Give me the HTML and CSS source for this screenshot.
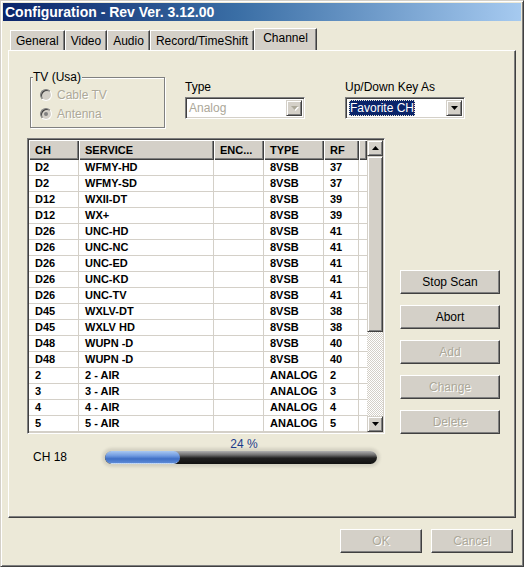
FILE: index.html
```html
<!DOCTYPE html>
<html lang="en">
<head>
  <meta charset="UTF-8">
  <title>Configuration - Rev Ver. 3.12.00</title>
  <link rel="stylesheet" href="styles.css">
</head>
<body>
  <div class="window">
    <div class="titlebar">Configuration - Rev Ver. 3.12.00</div>

    <div class="tabs">
      <div class="tab">General</div>
      <div class="tab">Video</div>
      <div class="tab">Audio</div>
      <div class="tab">Record/TimeShift</div>
      <div class="tab active">Channel</div>
    </div>

    <div class="panel">
      <div class="top-row">
        <div class="groupbox">
          <span class="group-title">TV (Usa)</span>
          <div class="radio-row disabled"><span class="radio"></span>Cable TV</div>
          <div class="radio-row disabled"><span class="radio checked"></span>Antenna</div>
        </div>

        <div class="field">
          <div class="field-label">Type</div>
          <div class="combo disabled">
            <span class="combo-text">Analog</span>
            <span class="combo-btn"><svg width="7" height="4" viewBox="0 0 7 4"><path d="M0 0h7L3.5 4z"/></svg></span>
          </div>
        </div>

        <div class="field field-wide">
          <div class="field-label">Up/Down Key As</div>
          <div class="combo">
            <span class="combo-text"><span class="selected">Favorite CH</span></span>
            <span class="combo-btn"><svg width="7" height="4" viewBox="0 0 7 4"><path d="M0 0h7L3.5 4z"/></svg></span>
          </div>
        </div>
      </div>

      <div class="middle">
        <div class="listview">
          <table class="grid">
            <colgroup>
              <col style="width: 50px">
              <col style="width: 135px">
              <col style="width: 50px">
              <col style="width: 60px">
              <col style="width: 35px">
              <col>
            </colgroup>
            <thead>
              <tr><th>CH</th><th>SERVICE</th><th>ENC...</th><th>TYPE</th><th>RF</th><th></th></tr>
            </thead>
            <tbody>
              <tr><td>D2</td><td>WFMY-HD</td><td></td><td>8VSB</td><td>37</td><td></td></tr>
              <tr><td>D2</td><td>WFMY-SD</td><td></td><td>8VSB</td><td>37</td><td></td></tr>
              <tr><td>D12</td><td>WXII-DT</td><td></td><td>8VSB</td><td>39</td><td></td></tr>
              <tr><td>D12</td><td>WX+</td><td></td><td>8VSB</td><td>39</td><td></td></tr>
              <tr><td>D26</td><td>UNC-HD</td><td></td><td>8VSB</td><td>41</td><td></td></tr>
              <tr><td>D26</td><td>UNC-NC</td><td></td><td>8VSB</td><td>41</td><td></td></tr>
              <tr><td>D26</td><td>UNC-ED</td><td></td><td>8VSB</td><td>41</td><td></td></tr>
              <tr><td>D26</td><td>UNC-KD</td><td></td><td>8VSB</td><td>41</td><td></td></tr>
              <tr><td>D26</td><td>UNC-TV</td><td></td><td>8VSB</td><td>41</td><td></td></tr>
              <tr><td>D45</td><td>WXLV-DT</td><td></td><td>8VSB</td><td>38</td><td></td></tr>
              <tr><td>D45</td><td>WXLV HD</td><td></td><td>8VSB</td><td>38</td><td></td></tr>
              <tr><td>D48</td><td>WUPN -D</td><td></td><td>8VSB</td><td>40</td><td></td></tr>
              <tr><td>D48</td><td>WUPN -D</td><td></td><td>8VSB</td><td>40</td><td></td></tr>
              <tr><td>2</td><td>2 - AIR</td><td></td><td>ANALOG</td><td>2</td><td></td></tr>
              <tr><td>3</td><td>3 - AIR</td><td></td><td>ANALOG</td><td>3</td><td></td></tr>
              <tr><td>4</td><td>4 - AIR</td><td></td><td>ANALOG</td><td>4</td><td></td></tr>
              <tr><td>5</td><td>5 - AIR</td><td></td><td>ANALOG</td><td>5</td><td></td></tr>
            </tbody>
          </table>
          <div class="scrollbar">
            <div class="sb-btn"><svg width="7" height="4" viewBox="0 0 7 4"><path d="M0 4h7L3.5 0z"/></svg></div>
            <div class="sb-thumb"></div>
            <div class="sb-track"></div>
            <div class="sb-btn"><svg width="7" height="4" viewBox="0 0 7 4"><path d="M0 0h7L3.5 4z"/></svg></div>
          </div>
        </div>

        <div class="side-buttons">
          <button class="btn">Stop Scan</button>
          <button class="btn">Abort</button>
          <button class="btn" disabled>Add</button>
          <button class="btn" disabled>Change</button>
          <button class="btn" disabled>Delete</button>
        </div>
      </div>

      <div class="progress-row">
        <div class="progress-label">CH 18</div>
        <div class="progress">
          <div class="progress-percent">24 %</div>
          <div class="progress-track">
            <div class="progress-fill" style="width: 27.5%"></div>
          </div>
        </div>
      </div>
    </div>

    <div class="footer">
      <button class="btn btn-small" disabled>OK</button>
      <button class="btn btn-small" disabled>Cancel</button>
    </div>
  </div>
</body>
</html>
```

FILE: styles.css
```css
body {
  margin: 0;
  font-family: 'Liberation Sans', Arial, sans-serif;
  font-size: 12px;
  color: #000;
  background: #ece9d8;
}

.window {
  width: 524px;
  height: 567px;
  box-sizing: border-box;
  padding: 2px;
  background: #ece9d8;
  border: 1px solid;
  border-color: #d4d0c8 #404040 #404040 #d4d0c8;
  box-shadow: inset 1px 1px #fff, inset -1px -1px #808080;
}

.titlebar {
  height: 18px;
  line-height: 18px;
  padding-left: 2px;
  color: #fff;
  font-weight: bold;
  font-size: 14px;
  white-space: nowrap;
  background: linear-gradient(to right, #0a246a, #3a6ea5 45%, #a6caf0);
}

/* tabs */
.tabs {
  display: flex;
  align-items: flex-end;
  height: 29px;
  margin-left: 7px;
}

.tab {
  height: 20px;
  line-height: 20px;
  padding: 0 5px;
  box-sizing: border-box;
  background: #d4d0c8;
  border: 1px solid;
  border-color: #fff #404040 transparent #fff;
  border-bottom: none;
  box-shadow: inset -1px 0 #808080;
  white-space: nowrap;
}

.tab.active {
  height: 22px;
  line-height: 19px;
  padding: 0 8px;
}

.panel {
  height: 468px;
  margin: 0 5px;
  box-sizing: border-box;
  border: 1px solid;
  border-color: #fff #404040 #404040 #fff;
  box-shadow: inset -1px -1px #808080;
}

/* top controls */
.top-row {
  display: flex;
  align-items: flex-start;
  margin: 26px 0 0 21px;
}

.groupbox {
  position: relative;
  width: 135px;
  height: 51px;
  box-sizing: border-box;
  padding: 7px 0 0 9px;
  border: 1px solid #808080;
  box-shadow: inset 1px 1px #fff, 1px 1px #fff;
}

.group-title {
  position: absolute;
  top: -8px;
  left: 2px;
  padding-right: 1px;
  line-height: 14px;
  background: #ece9d8;
}

.radio-row {
  display: flex;
  align-items: center;
  height: 19px;
}

.disabled,
.btn:disabled {
  color: #aca899;
  text-shadow: 1px 1px #fff;
}

.radio {
  width: 12px;
  height: 12px;
  box-sizing: border-box;
  margin-right: 5px;
  border-radius: 50%;
  border: 1px solid;
  border-color: #808080 #fff #fff #808080;
  box-shadow: inset 1px 1px #404040, inset -1px -1px #d4d0c8;
  background: #d4d0c8;
  display: flex;
  align-items: center;
  justify-content: center;
}

.radio.checked::after {
  content: "";
  width: 4px;
  height: 4px;
  border-radius: 50%;
  background: #808080;
}

.field {
  margin: 3px 0 0 20px;
}

.field-wide {
  margin-left: 40px;
}

.field-label {
  line-height: 14px;
  margin-bottom: 3px;
}

.combo {
  display: flex;
  width: 120px;
  height: 22px;
  box-sizing: border-box;
  padding: 2px;
  background: #fff;
  border: 1px solid;
  border-color: #808080 #fff #fff #808080;
  box-shadow: inset 1px 1px #404040, inset -1px -1px #d4d0c8;
}

.combo-text {
  flex: 1;
  line-height: 16px;
  padding-left: 1px;
  white-space: nowrap;
  text-shadow: none;
}

.combo.disabled .combo-text {
  color: #aca899;
}

.selected {
  display: inline-block;
  padding: 0 1px;
  background: #0a246a;
  color: #fff;
  outline: 1px dotted #ece9d8;
  outline-offset: -1px;
}

.combo-btn {
  width: 16px;
  height: 16px;
  box-sizing: border-box;
  display: flex;
  align-items: center;
  justify-content: center;
  background: #d4d0c8;
  border: 1px solid;
  border-color: #d4d0c8 #404040 #404040 #d4d0c8;
  box-shadow: inset 1px 1px #fff, inset -1px -1px #808080;
}

.combo.disabled .combo-btn svg {
  fill: #aca899;
  filter: drop-shadow(1px 1px 0 #fff);
}

/* list + side buttons */
.middle {
  display: flex;
  margin: 10px 0 0 18px;
}

.listview {
  display: flex;
  width: 358px;
  height: 296px;
  box-sizing: border-box;
  background: #fff;
  border: 1px solid;
  border-color: #808080 #fff #fff #808080;
  box-shadow: inset 1px 1px #404040, inset -1px -1px #d4d0c8;
  padding: 1px;
}

.grid {
  width: 338px;
  table-layout: fixed;
  border-collapse: separate;
  border-spacing: 0;
  font-size: 11px;
  font-weight: bold;
  align-self: flex-start;
}

.grid th {
  height: 20px;
  padding: 0 0 0 6px;
  text-align: left;
  background: #d4d0c8;
  box-shadow: inset 1px 1px #fff, inset -1px -1px #404040, inset -2px -2px #808080;
  white-space: nowrap;
  overflow: hidden;
}

.grid td {
  padding: 0 0 0 6px;
  line-height: 15px;
  border-right: 1px solid #d4d0c8;
  border-bottom: 1px solid #d4d0c8;
  white-space: nowrap;
  overflow: hidden;
}

.grid td:last-child {
  border-right: none;
}

.scrollbar {
  width: 16px;
  display: flex;
  flex-direction: column;
}

.sb-btn,
.sb-thumb {
  box-sizing: border-box;
  background: #d4d0c8;
  border: 1px solid;
  border-color: #d4d0c8 #404040 #404040 #d4d0c8;
  box-shadow: inset 1px 1px #fff, inset -1px -1px #808080;
}

.sb-btn {
  height: 16px;
  display: flex;
  align-items: center;
  justify-content: center;
}

.sb-thumb {
  height: 176px;
}

.sb-track {
  flex: 1;
  background-image: repeating-conic-gradient(#d4d0c8 0 25%, #fff 0 50%);
  background-size: 2px 2px;
}

.side-buttons {
  display: flex;
  flex-direction: column;
  gap: 11px;
  align-self: flex-end;
  margin-left: 15px;
}

.btn {
  width: 100px;
  height: 24px;
  padding: 0;
  font-family: inherit;
  font-size: 12px;
  color: #000;
  background: #d4d0c8;
  border: 1px solid;
  border-color: #fff #404040 #404040 #fff;
  box-shadow: inset -1px -1px #808080;
}

.btn-small {
  width: 82px;
}

/* progress */
.progress-row {
  display: flex;
  align-items: flex-end;
  margin: 4px 0 0 24px;
}

.progress-label {
  width: 72px;
  line-height: 14px;
}

.progress {
  width: 272px;
}

.progress-percent {
  text-align: center;
  line-height: 12px;
  margin-bottom: 1px;
  color: #1a3a8a;
  padding-left: 6px;
}

.progress-track {
  height: 13px;
  border-radius: 7px;
  background: linear-gradient(#b0b0b0, #707070 30%, #202020 55%, #111 100%);
  box-shadow: 0 0 3px 3px rgba(0, 0, 0, 0.1);
  overflow: hidden;
}

.progress-fill {
  height: 100%;
  box-sizing: border-box;
  border-radius: 7px;
  border-bottom: 1px dotted #dbe8fa;
  background: linear-gradient(#a9c8f2, #6f9ae0 40%, #3f6fc5 65%, #5d8ad6);
}

.footer {
  display: flex;
  justify-content: flex-end;
  gap: 9px;
  padding: 11px 8px 0 0;
}
```
